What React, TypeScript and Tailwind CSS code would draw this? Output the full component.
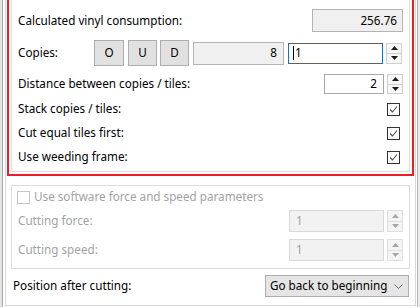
import React from 'react';

const UpDown: React.FC<{ disabled?: boolean }> = ({ disabled }) => {
	const fill = disabled ? '#a6a6a6' : '#1a1a1a'
	return (
		<div className={disabled
			? "flex flex-col w-[16px] h-full ml-[3px] border border-[#e0e0e0] bg-[#f4f4f4]"
			: "flex flex-col w-[16px] h-full ml-[3px] border border-[#cfcfcf] bg-[#f7f7f7]"}>
			<div className={disabled
				? "flex-1 flex items-center justify-center border-b border-[#e0e0e0]"
				: "flex-1 flex items-center justify-center border-b border-[#cfcfcf]"}>
				<svg width="7" height="4" viewBox="0 0 7 4"><path d="M0 4 L3.5 0 L7 4 Z" fill={fill} /></svg>
			</div>
			<div className="flex-1 flex items-center justify-center">
				<svg width="7" height="4" viewBox="0 0 7 4"><path d="M0 0 L3.5 4 L7 0 Z" fill={fill} /></svg>
			</div>
		</div>
	)
}

const CheckBox: React.FC<{ checked?: boolean, disabled?: boolean }> = ({ checked, disabled }) => (
	<div className={disabled
		? "w-[13px] h-[13px] border border-[#c4c4c4] bg-white shrink-0"
		: "w-[13px] h-[13px] border border-[#333333] bg-white shrink-0 flex items-center justify-center"}>
		{checked &&
			<svg width="11" height="11" viewBox="0 0 11 11">
				<path d="M2 5.5 L4.5 8 L9 2.5" fill="none" stroke="#4d4d4d" strokeWidth="1.1" />
			</svg>
		}
	</div>
)

const CheckRow: React.FC<{ label: string }> = ({ label }) => (
	<div className="h-[24px] flex items-center justify-between">
		<span>{label}</span>
		<div className="mr-[3px]"><CheckBox checked /></div>
	</div>
)

const DisabledNumber: React.FC<{ label: string, className: string }> = ({ label, className }) => (
	<div className={className}>
		<span className="flex-1 pl-[1px] text-[#a3a3a3]">{label}</span>
		<div className="w-[95px] h-full border border-[#d9d9d9] bg-[#f2f2f2] flex items-center pl-[6px] text-[#a3a3a3]">1</div>
		<UpDown disabled />
	</div>
)

const App: React.FC = () => {
	return (
		<div className="w-[420px] h-[307px] overflow-hidden bg-white flex text-[11.7px] text-black font-['Noto_Sans',sans-serif] leading-none">
			<div className="w-[3px] shrink-0 bg-[#e4e4e4] border-r border-[#a8a8a8]" />
			<div className="w-[2px] shrink-0" />
			<div className="w-[411px] shrink-0 self-start border-x border-b border-[#d9d9d9] px-[1px] pb-[8px] flex flex-col">
				<div className="-mt-[5px] border-2 border-[#ee1c25] p-[2px]">
					<div className="border border-[#dcdcdc] px-[6px] pb-[2px]">
						<div className="mt-[9px] h-[23px] flex items-center justify-between">
							<span>Calculated vinyl consumption:</span>
							<div className="w-[91px] h-full border border-[#b4b4b4] bg-[#f0f0f0] flex items-center justify-end pr-[5px]">256.76</div>
						</div>
						<div className="mt-[8px] h-[26px] flex items-center">
							<span className="w-[76px] shrink-0">Copies:</span>
							<button className="w-[30px] h-full border border-[#adadad] bg-[#e1e1e1]">O</button>
							<button className="ml-[4px] w-[29px] h-full border border-[#adadad] bg-[#e1e1e1]">U</button>
							<button className="ml-[3px] w-[29px] h-full border border-[#adadad] bg-[#e1e1e1]">D</button>
							<div className="ml-[4px] w-[91px] h-[23px] border border-[#b4b4b4] bg-[#f0f0f0] flex items-center justify-end pr-[6px]">8</div>
							<div className="ml-[4px] w-[95px] h-[21px] border border-[#0078d7] bg-white flex items-center pl-[4px]">
								<span className="w-[1px] h-[14px] bg-black mr-[1px]" />
								<span>1</span>
							</div>
							<div className="h-[21px] flex"><UpDown /></div>
						</div>
						<div className="mt-[8px] h-[20px] flex items-center">
							<span className="flex-1">Distance between copies / tiles:</span>
							<div className="w-[60px] h-full border border-[#a8a8a8] bg-white flex items-center justify-end pr-[6px]">2</div>
							<UpDown />
						</div>
						<div className="mt-[3px]">
							<CheckRow label="Stack copies / tiles:" />
							<CheckRow label="Cut equal tiles first:" />
							<CheckRow label="Use weeding frame:" />
						</div>
					</div>
				</div>

				<div className="mt-[9px] mx-[4px] border border-[#dcdcdc] pl-[5px] pr-[6px] pb-[7px]">
					<div className="mt-[4px] h-[14px] flex items-center">
						<CheckBox disabled />
						<span className="ml-[4px] text-[#a3a3a3]">Use software force and speed parameters</span>
					</div>
					<DisabledNumber label="Cutting force:" className="mt-[6px] h-[22px] flex items-center" />
					<DisabledNumber label="Cutting speed:" className="mt-[7px] h-[22px] flex items-center" />
				</div>

				<div className="mt-[6px] h-[22px] flex items-center pl-[6px] pr-[5px]">
					<span className="flex-1">Position after cutting:</span>
					<div className="w-[144px] h-full border border-[#adadad] bg-[#e5e5e5] flex items-center pl-[4px] pr-[5px]">
						<span className="flex-1">Go back to beginning</span>
						<svg width="9" height="5" viewBox="0 0 9 5">
							<path d="M0.5 0.5 L4.5 4.5 L8.5 0.5" fill="none" stroke="#6e6e6e" strokeWidth="1" />
						</svg>
					</div>
				</div>
			</div>
			<div className="w-[1px] shrink-0" />
			<div className="flex-1 border-l border-[#b0b0b0] bg-[#ececec]" />
		</div>
	)
}
export default App;
